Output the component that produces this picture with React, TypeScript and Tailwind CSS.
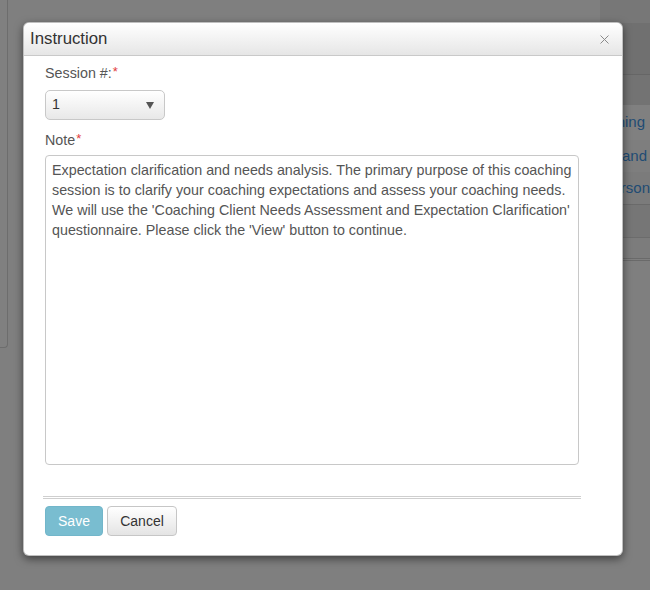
import React from "react";

function Req() {
  return <sup className="text-[#e23c3c] text-[13px] ml-[1px] relative -top-[2px]">*</sup>;
}

export default function App() {
  return (
    <div
      className="relative w-[650px] h-[590px] overflow-hidden bg-[#7f7f7f]"
      style={{ fontFamily: '"Liberation Sans", Arial, sans-serif' }}
    >
      {/* background page (dimmed) */}
      <div className="flex h-full">
        <div className="w-[8px] h-[348px] bg-[#808080] border-r border-b border-[#6d6d6d] rounded-br-[4px]" />
        <div className="flex-1" />
        <div className="w-[50px] flex flex-col text-[#1f4c74] text-[15px]">
          <div className="h-[23px] bg-[#777777]" />
          <div className="h-[52px] bg-[#707070] border-b border-[#666666]" />
          <div className="h-[30px] bg-[#737373]" />
          <div className="h-[35px] bg-[#808080] flex items-center justify-end pr-[5px]">ning</div>
          <div className="h-[32px] bg-[#7e7e7e] flex items-center justify-end pr-[3px]">and</div>
          <div className="h-[33px] bg-[#7b7b7b] border-b border-[#6a6a6a] flex items-center justify-end pr-0">rson</div>
          <div className="h-[33px] bg-[#767676] border-b border-[#6c6c6c]" />
          <div className="h-[20px] bg-[#7c7c7c]" />
          <div className="h-[3px] border-y border-[#6a6a6a]" />
          <div className="flex-1 bg-[#7f7f7f]" />
        </div>
      </div>

      {/* modal */}
      <div className="absolute left-[23px] top-[22px] w-[600px] h-[534px] bg-white rounded-[6px] border border-[rgba(0,0,0,0.25)] shadow-[0_3px_9px_rgba(0,0,0,0.5)] flex flex-col">
        <div className="h-[33px] shrink-0 flex items-center justify-between pl-[6px] pr-[13px] rounded-t-[6px] bg-gradient-to-b from-white to-[#e6e6e6] border-b border-[#c9c9c9]">
          <span className="text-[16.8px] text-[#333]">Instruction</span>
          <svg width="9" height="9" viewBox="0 0 9 9" className="mt-[1px]">
            <path d="M0.5 0.5 L8.5 8.5 M8.5 0.5 L0.5 8.5" stroke="#8a8a8a" strokeWidth="1" />
          </svg>
        </div>

        <div className="flex flex-col px-[21px] pt-[7px] text-[14.3px] text-[#555]">
          <div className="leading-[20px]">
            Session #:<Req />
          </div>
          <div className="mt-[7px] w-[120px] h-[30px] rounded-[5px] border border-[#c8c8c8] bg-gradient-to-b from-white to-[#e8e8e8] flex items-center justify-between pl-[6px] pr-[10px] text-[#333]">
            <span>1</span>
            <svg width="8" height="7" viewBox="0 0 8 7">
              <path d="M0 0 L8 0 L4 7 Z" fill="#555" />
            </svg>
          </div>
          <div className="mt-[10px] leading-[20px]">
            Note<Req />
          </div>
          <div className="mt-[5px] w-[534px] h-[310px] border border-[#c8c8c8] rounded-[4px] pl-[6px] pr-[4px] pt-[4px] leading-[20px] text-[14.3px] text-[#555] whitespace-nowrap">
            Expectation clarification and needs analysis. The primary purpose of this coaching
            <br />
            session is to clarify your coaching expectations and assess your coaching needs.
            <br />
            We will use the 'Coaching Client Needs Assessment and Expectation Clarification'
            <br />
            questionnaire. Please click the 'View' button to continue.
          </div>
          <div className="mt-[31px] -mx-[2px] w-[538px] h-[3px] border-y border-[#cfcfcf]" />
          <div className="mt-[7px] flex gap-[4px] text-[14px]">
            <div className="w-[58px] h-[30px] rounded-[4px] bg-[#79bdd0] border border-[#72b6ca] text-white flex items-center justify-center">
              Save
            </div>
            <div className="w-[70px] h-[30px] rounded-[4px] border border-[#c6c6c6] bg-gradient-to-b from-white to-[#e4e4e4] text-[#333] flex items-center justify-center">
              Cancel
            </div>
          </div>
        </div>
      </div>
    </div>
  );
}
